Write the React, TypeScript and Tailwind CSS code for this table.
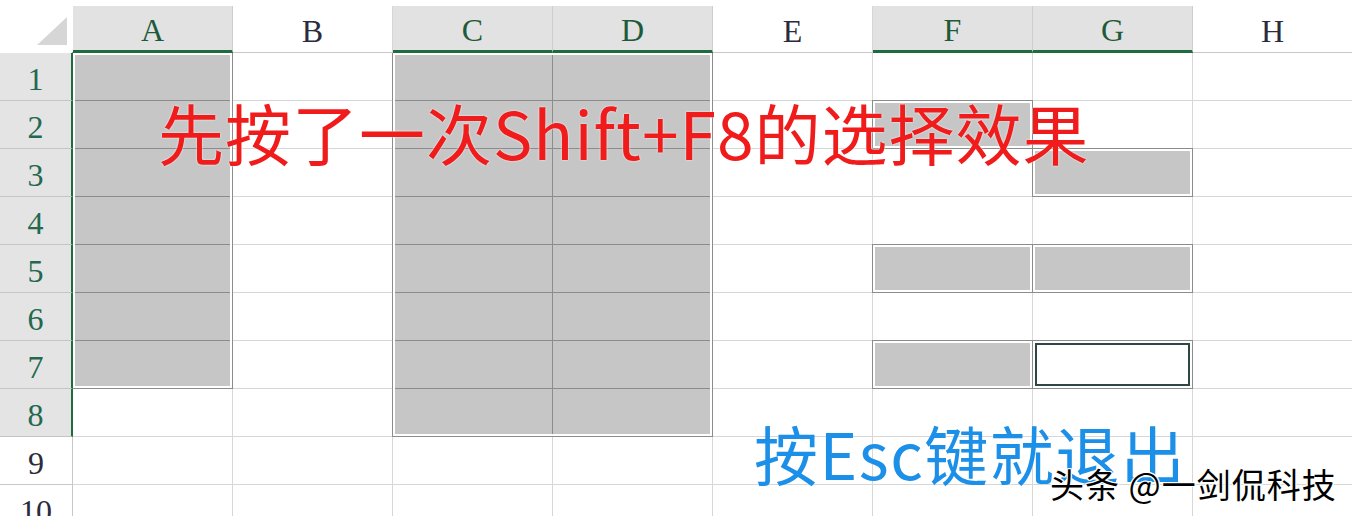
const cols = ["A", "B", "C", "D", "E", "F", "G", "H"];
const rows = [1, 2, 3, 4, 5, 6, 7, 8, 9, 10];
const activeCols = ["A", "C", "D", "F", "G"];

// cells that are part of the Shift+F8 selection (grey)
const isSelected = (c: string, r: number) => {
  if (c === "A" && r <= 7) return true;
  if ((c === "C" || c === "D") && r <= 8) return true;
  if (c === "F" && (r === 2 || r === 5 || r === 7)) return true;
  if (c === "G" && (r === 3 || r === 5)) return true;
  return false;
};

function Box({ className }: { className: string }) {
  return (
    <div
      className={`-ml-px -mt-px border border-[#8c8c8c] shadow-[inset_0_0_0_2px_#ffffff] ${className}`}
    />
  );
}

export default function App() {
  return (
    <div className="relative w-[1352px] h-[516px] overflow-hidden bg-white pt-[6px] leading-none font-['Liberation_Serif',serif]">
      {/* Column headers */}
      <div className="relative z-10 grid grid-cols-[73px_repeat(8,160px)] grid-rows-[47px] h-[47px]">
        <div className="flex items-end justify-end pr-[6px] pb-[8px]">
          <div className="w-0 h-0 border-l-[30px] border-l-transparent border-b-[28px] border-b-[#d6d6d6]" />
        </div>
        {cols.map((c) =>
          activeCols.includes(c) ? (
            <div
              key={c}
              className="flex items-center justify-center pt-[4px] bg-[#e2e2e2] border-r border-r-[#cdcdcd] border-b-[3px] border-b-[#1f6b3f] text-[32px] text-[#1d5a3a]"
            >
              {c}
            </div>
          ) : (
            <div
              key={c}
              className="flex items-center justify-center pt-[4px] bg-white border-r border-r-[#d6d6d6] border-b border-b-[#c8c8c8] text-[32px] text-[#2b2b3d]"
            >
              {c}
            </div>
          )
        )}
      </div>

      {/* Sheet body: cell grid with the selection boxes stacked on top */}
      <div className="grid">
        <div className="col-start-1 row-start-1 grid grid-cols-[73px_repeat(8,160px)] grid-rows-[repeat(10,48px)]">
          {rows.map((r) => (
            <div key={r} className="contents">
              {r <= 8 ? (
                <div className="relative z-10 flex items-center justify-center pt-[4px] bg-[#e4e4e4] border-r-2 border-r-[#1f6b3f] border-b border-b-[#c4c4c4] text-[32px] text-[#23684f]">
                  {r}
                </div>
              ) : (
                <div className="flex items-center justify-center pt-[4px] bg-white border-r border-b border-[#c8c8c8] text-[32px] text-[#2b2b3d]">
                  {r}
                </div>
              )}
              {cols.map((c) =>
                isSelected(c, r) ? (
                  <div key={c} className="bg-[#c6c6c6] border-r border-b border-[#8c8c8c]" />
                ) : (
                  <div key={c} className="bg-white border-r border-b border-[#d7d7d7]" />
                )
              )}
            </div>
          ))}
        </div>

        <div className="col-start-1 row-start-1 grid grid-cols-[73px_repeat(8,160px)] grid-rows-[repeat(10,48px)] pointer-events-none">
          <Box className="col-start-2 row-start-1 row-span-7" />
          <Box className="col-start-4 col-span-2 row-start-1 row-span-8" />
          <Box className="col-start-7 row-start-2" />
          <Box className="col-start-8 row-start-3" />
          <Box className="col-start-7 row-start-5" />
          <Box className="col-start-8 row-start-5" />
          <Box className="col-start-7 row-start-7" />
          <div className="col-start-8 row-start-7 -ml-px -mt-px border border-[#8c8c8c] bg-white shadow-[inset_0_0_0_2px_#ffffff,inset_0_0_0_4px_#2c4744]" />
        </div>
      </div>

      {/* Captions */}
      <div className="absolute left-[158px] top-[98px] whitespace-nowrap text-[66px] tracking-[1px] leading-none text-[#f01b1b] font-['Noto_Sans_CJK_SC',sans-serif] [text-shadow:0_0_2px_#ffffff]">
        先按了一次Shift+F8的选择效果
      </div>
      <div className="absolute left-[754px] top-[420px] whitespace-nowrap text-[64px] tracking-[1.5px] leading-none text-[#1c8fe8] font-['Noto_Sans_CJK_SC',sans-serif]">
        按Esc键就退出
      </div>
      <div className="absolute left-[1050px] top-[467px] whitespace-nowrap text-[34px] tracking-[1px] leading-none text-black font-['Noto_Sans_CJK_SC',sans-serif] [text-shadow:1px_0_0_#fff,-1px_0_0_#fff,0_1px_0_#fff,0_-1px_0_#fff,1px_1px_0_#fff,-1px_-1px_0_#fff,1px_-1px_0_#fff,-1px_1px_0_#fff]">
        头条 @一剑侃科技
      </div>
    </div>
  );
}
